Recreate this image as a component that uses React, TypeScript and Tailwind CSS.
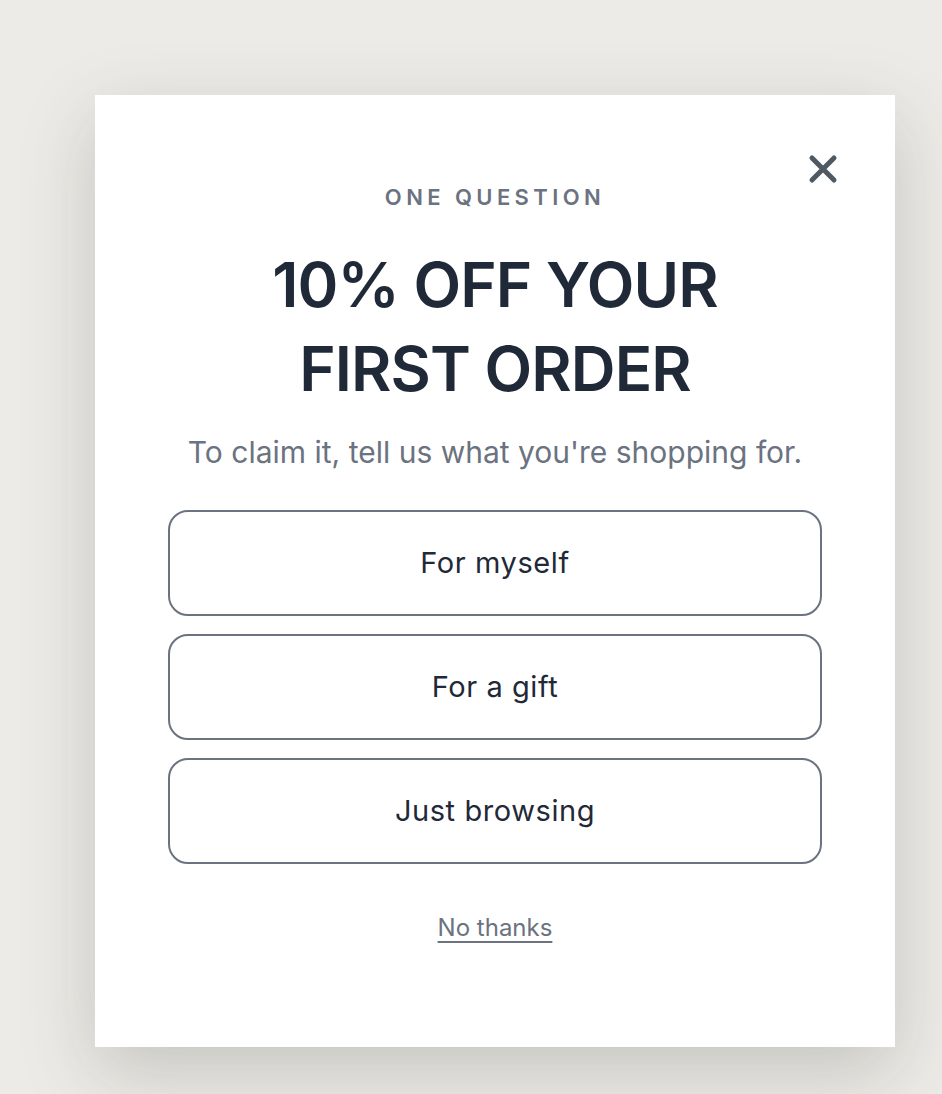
const options = ["For myself", "For a gift", "Just browsing"];

export default function App() {
  return (
    <div className="min-h-screen bg-[#ecebe7] pl-[95px] pt-[95px] pb-[47px]" style={{ fontFamily: "Inter, 'Noto Sans', sans-serif" }}>
      <div className="relative w-[800px] bg-white px-[73px] pt-[88px] pb-[101px] shadow-[0_24px_70px_rgba(60,58,50,0.22)]">
        <button type="button" aria-label="Close" className="absolute right-[56px] top-[58px] flex h-[32px] w-[32px] items-center justify-center text-[#505862]">
          <svg width="32" height="32" viewBox="0 0 32 32" fill="none" stroke="currentColor" strokeWidth="5" strokeLinecap="round">
            <path d="M5 5 L27 27 M27 5 L5 27" />
          </svg>
        </button>

        <p className="text-center text-[22px] font-semibold leading-[28px] tracking-[0.2em] text-[#6b7280]">ONE QUESTION</p>

        <h2 className="mt-[32px] text-center text-[62px] font-semibold leading-[84px] tracking-[-0.015em] text-[#1f2937]">
          10% OFF YOUR
          <br />
          FIRST ORDER
        </h2>

        <p className="mt-[21px] text-center text-[30px] leading-[40px] text-[#6b7280]">
          To claim it, tell us what you're shopping for.
        </p>

        <div className="mt-[38px] flex flex-col gap-[18px]">
          {options.map((option) => (
            <button key={option} type="button" className="flex h-[106px] w-full items-center justify-center rounded-[20px] border-2 border-[#6b7280] bg-white text-[29px] tracking-[0.02em] text-[#1f2937]">
              {option}
            </button>
          ))}
        </div>

        <p className="mt-[48px] text-center leading-[32px]">
          <a href="#" className="text-[24px] text-[#6b7280] underline decoration-2 underline-offset-[5px]">No thanks</a>
        </p>
      </div>
    </div>
  );
}
